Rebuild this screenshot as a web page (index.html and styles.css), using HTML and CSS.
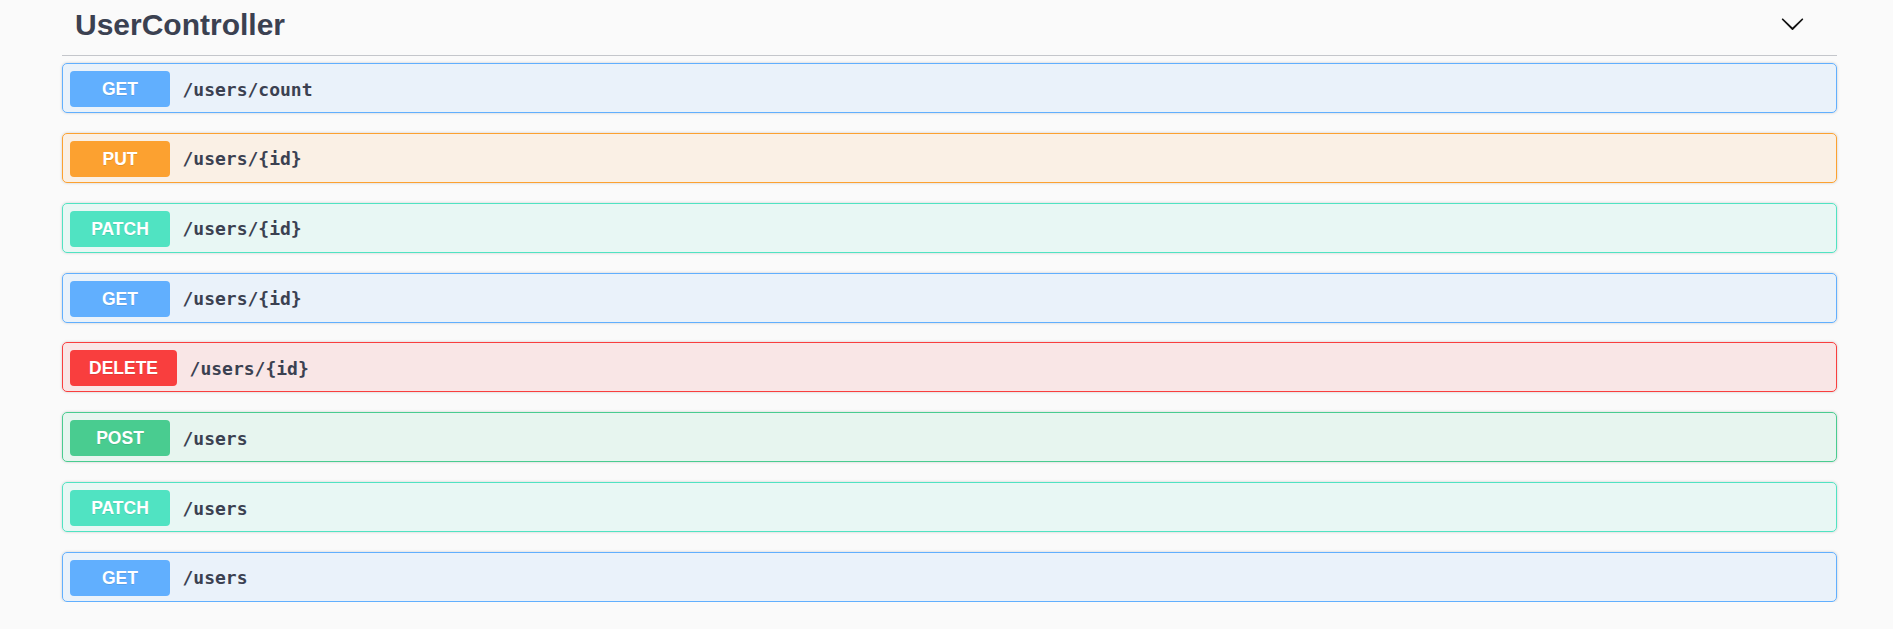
FILE: index.html
```html
<!DOCTYPE html>
<html lang="en">
<head>
<meta charset="utf-8">
<title>UserController</title>
<link rel="stylesheet" href="styles.css">
</head>
<body>
<div class="wrapper">
  <section class="tag-section">
    <h3 class="opblock-tag">
      <span class="tag-name">UserController</span>
      <button class="expand" aria-label="collapse">
        <svg width="25" height="25" viewBox="0 0 20 20" aria-hidden="true"><path d="M17.418 6.109c.272-.268.709-.268.979 0s.271.701 0 .969l-7.908 7.83c-.27.268-.707.268-.979 0l-7.908-7.830c-.27-.268-.27-.701 0-.969.271-.268.709-.268.979 0L10 13.25l7.418-7.141z"/></svg>
      </button>
    </h3>
    <div class="ops">
      <div class="opblock get"><span class="method">GET</span><span class="path">/users/count</span></div>
      <div class="opblock put"><span class="method">PUT</span><span class="path">/users/{id}</span></div>
      <div class="opblock patch"><span class="method">PATCH</span><span class="path">/users/{id}</span></div>
      <div class="opblock get"><span class="method">GET</span><span class="path">/users/{id}</span></div>
      <div class="opblock delete"><span class="method">DELETE</span><span class="path">/users/{id}</span></div>
      <div class="opblock post"><span class="method">POST</span><span class="path">/users</span></div>
      <div class="opblock patch"><span class="method">PATCH</span><span class="path">/users</span></div>
      <div class="opblock get"><span class="method">GET</span><span class="path">/users</span></div>
    </div>
  </section>
</div>
</body>
</html>
```

FILE: styles.css
```css
html, body {
  margin: 0;
  padding: 0;
  background: #fafafa;
}

body {
  font-family: "Liberation Sans", Arial, sans-serif;
  color: #3b4151;
}

.wrapper {
  padding: 0 56px 0 62px;
}

.opblock-tag {
  display: flex;
  align-items: center;
  margin: 0;
  padding: 8px 32px 13px 13px;
  height: 56px;
  box-sizing: border-box;
  border-bottom: 1px solid #c4c6cb;
  font-size: 30px;
  line-height: 34px;
  font-weight: 700;
  color: #3b4151;
}

.tag-name {
  flex: 1;
}

.expand {
  display: flex;
  border: 0;
  background: none;
  padding: 0;
  margin-top: -3px;
  cursor: pointer;
}

.expand svg {
  fill: #111;
}

.ops {
  display: flex;
  flex-direction: column;
  gap: 19.85px;
  padding-top: 7px;
}

.opblock {
  display: flex;
  align-items: center;
  height: 50px;
  box-sizing: border-box;
  padding: 7px 7px 5px 7px;
  border: 1px solid;
  border-radius: 5px;
  box-shadow: 0 0 3px rgba(0, 0, 0, 0.19);
}

.method {
  min-width: 100px;
  box-sizing: border-box;
  padding: 0 19px;
  height: 36px;
  line-height: 36px;
  text-align: center;
  border-radius: 4px;
  font-family: "Liberation Sans", Arial, sans-serif;
  font-size: 17.5px;
  font-weight: 700;
  color: #fff;
  text-shadow: 0 1px 0 rgba(0, 0, 0, 0.1);
}

.path {
  margin-left: 12.5px;
  font-family: "DejaVu Sans Mono", "Liberation Mono", monospace;
  font-size: 18px;
  font-weight: 700;
  color: #3b4151;
}

.get { background: rgba(97, 175, 254, 0.1); border-color: #61affe; }
.get .method { background: #61affe; }

.put { background: rgba(252, 161, 48, 0.1); border-color: #fca130; }
.put .method { background: #fca130; }

.patch { background: rgba(80, 227, 194, 0.1); border-color: #50e3c2; }
.patch .method { background: #50e3c2; }

.delete { background: rgba(249, 62, 62, 0.1); border-color: #f93e3e; }
.delete .method { background: #f93e3e; }

.post { background: rgba(73, 204, 144, 0.1); border-color: #49cc90; }
.post .method { background: #49cc90; }
```
